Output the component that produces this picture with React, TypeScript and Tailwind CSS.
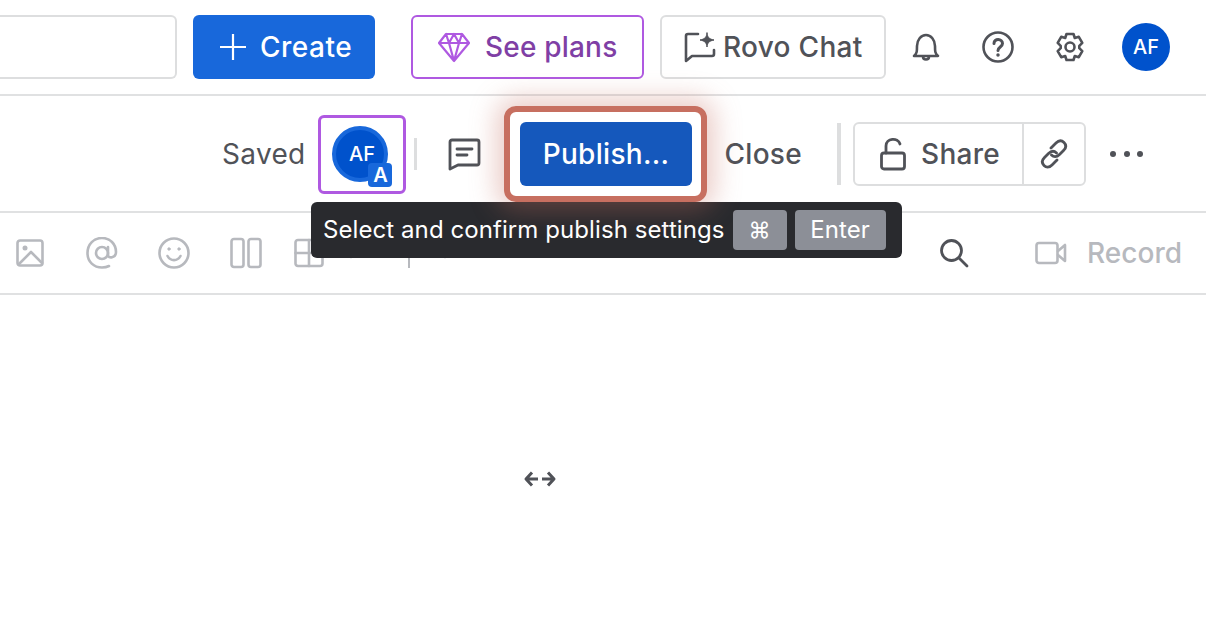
import type { ReactNode } from "react";

function Icon({ size = 32, vb = 32, className = "", width = 2.6, children }: { size?: number; vb?: number; className?: string; width?: number; children: ReactNode }) {
  return (
    <svg width={size} height={size} viewBox={`0 0 ${vb} ${vb}`} fill="none" stroke="currentColor" strokeWidth={width} strokeLinecap="round" strokeLinejoin="round" className={className}>
      {children}
    </svg>
  );
}

function TopBar() {
  return (
    <header className="flex h-[96px] shrink-0 items-center border-b-2 border-[#e0e1e2]">
      <div className="h-16 w-[177px] rounded-r-md border-2 border-l-0 border-[#dddedf]" />
      <button className="ml-4 flex h-16 w-[182px] items-center rounded-md bg-[#1868db] pl-[26px] text-[28px] font-medium tracking-[0.5px] text-white">
        <Icon size={28} vb={28} className="mr-[13px]" width={2.2}>
          <path d="M14 1v26M1 14h26" strokeLinecap="butt" />
        </Icon>
        Create
      </button>
      <button className="ml-9 flex h-16 w-[233px] items-center rounded-md border-2 border-[#af59e1] pl-[24px] text-[28px] font-medium tracking-[0.2px] text-[#803fa5]">
        <Icon size={34} vb={34} className="mr-[14px] text-[#af59e1]" width={2.2}>
          <path d="M9 4h16l7 9-15 18L2 13zM2 13h30M12 13l5 18 5-18M9 4l3 9 5-9 5 9 3-9" />
        </Icon>
        See plans
      </button>
      <button className="ml-4 flex h-16 w-[226px] items-center rounded-md border-2 border-[#dddedf] pl-[22px] text-[28px] font-medium tracking-[0.3px] text-[#505258]">
        <Icon size={32} className="mr-[7px]" width={2.6}>
          <path d="M14 3H4a2 2 0 0 0-2 2v25l6-5h20a2 2 0 0 0 2-2v-4" />
          <path d="M23 2c.6 4.500 2 6 7 7-5 1-6.400 2.500-7 7-.6-4.500-2-6-7-7 5-1 6.400-2.500 7-7z" fill="currentColor" strokeWidth={1} />
        </Icon>
        Rovo Chat
      </button>
      <div className="ml-[24px] flex w-[32px] justify-center text-[#505258]">
        <Icon size={32}>
          <path d="M4 25c3-2.500 3-5 3-10 0-6 4-11 9-11s9 5 9 11c0 5 0 7.500 3 10zM13 25.500c0 4 6 4 6 0" />
        </Icon>
      </div>
      <div className="ml-10 text-[#505258]">
        <Icon size={32}>
          <circle cx="16" cy="16" r="14.500" />
          <path d="M12 12.500c0-5.500 8.500-5 8.500 0 0 3.500-4.500 3.500-4.500 7" strokeWidth={3} />
          <circle cx="16" cy="24" r="1" fill="currentColor" strokeWidth={1.5} />
        </Icon>
      </div>
      <div className="ml-10 text-[#505258]">
        <Icon size={32}>
          <circle cx="16" cy="16" r="4.500" />
          <path d="M12.500 3h7l1.300 4 4-1.200 3.500 6-3 3 0 2.400 3 3-3.500 6-4-1.200-1.300 4h-7l-1.300-4-4 1.200-3.500-6 3-3v-2.400l-3-3 3.500-6 4 1.200z" />
        </Icon>
      </div>
      <div className="ml-[36px] flex h-12 w-12 items-center justify-center rounded-full bg-[#0052cc] text-[20px] font-medium text-white">AF</div>
    </header>
  );
}

function DocBar() {
  return (
    <div className="flex h-[117px] shrink-0 items-center justify-end border-b-2 border-[#e0e1e2] pt-px pr-[63px]">
      <span className="text-[28px] tracking-[0.3px] text-[#505258]">Saved</span>
      <div className="relative ml-[13px] flex h-[79px] w-[88px] items-center rounded-md border-[3px] border-[#af59e1] pl-[11px]">
        <div className="flex h-[56px] w-[56px] items-center justify-center rounded-full border-4 border-[#1868db] bg-[#0052cc] pl-[3px] text-[20px] font-medium text-white">AF</div>
        <div className="absolute top-[45px] left-[47px] flex h-6 w-6 items-center justify-center rounded bg-[#1868db] text-[20px] font-semibold text-white">A</div>
      </div>
      <div className="ml-[8px] h-8 w-[3px] bg-[#dddedf]" />
      <div className="ml-[31px] text-[#505258]">
        <Icon size={34} vb={34} width={2.8}>
          <path d="M4 3h25a2 2 0 0 1 2 2v21a2 2 0 0 1-2 2H10l-8 4V5a2 2 0 0 1 2-2z" />
          <path d="M9 12h15M9 18h10" />
        </Icon>
      </div>
      <div className="relative z-20 ml-[22px] flex h-[96px] w-[203px] items-center justify-center rounded-xl border-[6px] border-[#c76f60] bg-white shadow-[0_0_26px_8px_rgba(199,111,96,0.35)]">
        <button className="h-16 w-[172px] rounded-md bg-[#1558bc] text-[28px] font-medium tracking-[0.3px] text-white">Publish...</button>
      </div>
      <span className="ml-[17px] text-[28px] font-medium tracking-[0.3px] text-[#505258]">Close</span>
      <div className="ml-[35px] h-[62px] w-[4px] bg-[#dddedf]" />
      <div className="ml-[12px] flex h-16 w-[233px] rounded-md border-2 border-[#dddedf] text-[#505258]">
        <div className="flex w-[169px] items-center border-r-2 border-[#dddedf] pl-[25px] text-[28px] font-medium tracking-[0.3px]">
          <svg width="26" height="34" viewBox="0 0 26 34" fill="none" stroke="currentColor" strokeWidth="2.800" strokeLinecap="round" strokeLinejoin="round" className="mr-[15px]">
            <rect x="1.500" y="16" width="23" height="16" rx="2.500" />
            <path d="M6 16V9c0-8 12-9 14-2" />
          </svg>
          Share
        </div>
        <div className="flex flex-1 items-center justify-center">
          <Icon size={30} vb={30} width={2.8}>
            <path d="M12 9l5-5c3-3 6-2.500 8-.500s2.500 5-.500 8l-4 4c-3 3-6 2.500-8 .500" />
            <path d="M18 21l-5 5c-3 3-6 2.500-8 .500s-2.500-5 .500-8l4-4c3-3 6-2.500 8-.500" />
          </Icon>
        </div>
      </div>
      <div className="ml-[24px] flex w-[33px] justify-between">
        <span className="h-[6px] w-[6px] rounded-full bg-[#505258]" />
        <span className="h-[6px] w-[6px] rounded-full bg-[#505258]" />
        <span className="h-[6px] w-[6px] rounded-full bg-[#505258]" />
      </div>
    </div>
  );
}

function Toolbar() {
  return (
    <div className="flex h-[82px] shrink-0 items-center border-b-2 border-[#e0e1e2] pr-[24px] pl-[16px] text-[#b7b9be]">
      <Icon size={28} vb={28} width={2.6}>
        <rect x="1.500" y="1.500" width="25" height="25" rx="2.500" />
        <circle cx="9" cy="9" r="2.500" fill="currentColor" strokeWidth={0} />
        <path d="M3 25l12-12 11 11" />
      </Icon>
      <div className="ml-[42px]">
        <Icon size={32} width={2.6}>
          <circle cx="16" cy="16" r="6" />
          <path d="M22 10v8c0 4 8 3 8-3 0-8-6-14-14-14S1.500 7 1.500 16 8 30.500 16 30.500c3 0 5-.5 7-1.500" />
        </Icon>
      </div>
      <div className="ml-[40px]">
        <Icon size={32} width={2.6}>
          <circle cx="16" cy="16" r="14.500" />
          <path d="M9.500 19c3 5.500 10 5.500 13 0" />
          <circle cx="11" cy="12" r="1.200" fill="currentColor" strokeWidth={1} />
          <circle cx="21" cy="12" r="1.200" fill="currentColor" strokeWidth={1} />
        </Icon>
      </div>
      <div className="ml-[40px]">
        <Icon size={32} width={2.6}>
          <rect x="1.500" y="2" width="12" height="28" rx="2.500" />
          <rect x="18.500" y="2" width="12" height="28" rx="2.500" />
        </Icon>
      </div>
      <div className="ml-[32px]">
        <Icon size={30} vb={30} width={2.6}>
          <rect x="1.500" y="2" width="27" height="26" rx="2.500" />
          <path d="M15 2v13M1.500 15h27M15 15v13" />
        </Icon>
      </div>
      <div className="ml-[21px]">
        <Icon size={12} vb={12} width={2.6}>
          <path d="M1 1l5 9 5-9" />
        </Icon>
      </div>
      <div className="ml-[51px] h-[30px] w-[2px] bg-[#b7b9be]" />
      <div className="ml-[29px]">
        <Icon size={12} vb={12} width={2.6}>
          <path d="M1 1l5 9 5-9" />
        </Icon>
      </div>
      <div className="ml-auto text-[#505258]">
        <Icon size={30} vb={30} width={2.8}>
          <circle cx="12.500" cy="12.500" r="10" />
          <path d="M20 20l8 8" />
        </Icon>
      </div>
      <div className="ml-[66px]">
        <Icon size={32} width={2.6}>
          <rect x="1.500" y="6" width="21" height="20" rx="2.500" />
          <path d="M23 14l7-6v16l-7-6" />
        </Icon>
      </div>
      <span className="ml-[20px] text-[28px] font-medium">Record</span>
    </div>
  );
}

export default function App() {
  return (
    <div className="relative flex h-[636px] w-[1206px] flex-col overflow-hidden bg-white font-['Inter',sans-serif]">
      <TopBar />
      <DocBar />
      <Toolbar />
      <div className="pt-[174px] pl-[523px] text-[#505258]">
        <svg width="34" height="20" viewBox="0 0 34 20" fill="none" stroke="currentColor" strokeWidth="3" strokeLinejoin="round">
          <path d="M15 10H3M9 3.500L3 10l6 6.500M19 10h12M25 3.500l6 6.500-6 6.500" />
        </svg>
      </div>
      <div className="absolute top-[202px] left-[311px] z-10 flex h-[56px] w-[591px] items-center rounded-md bg-[#292a2e] pl-[12px] text-[24px] tracking-[0.08px] text-white">
        Select and confirm publish settings
        <kbd className="ml-[8px] flex h-10 w-[54px] items-center justify-center rounded bg-[#8c8f97] font-['Inter',sans-serif] text-[22px]">⌘</kbd>
        <kbd className="ml-[8px] flex h-10 w-[91px] items-center justify-center rounded bg-[#8c8f97] font-['Inter',sans-serif] text-[24px] font-normal">Enter</kbd>
      </div>
    </div>
  );
}
